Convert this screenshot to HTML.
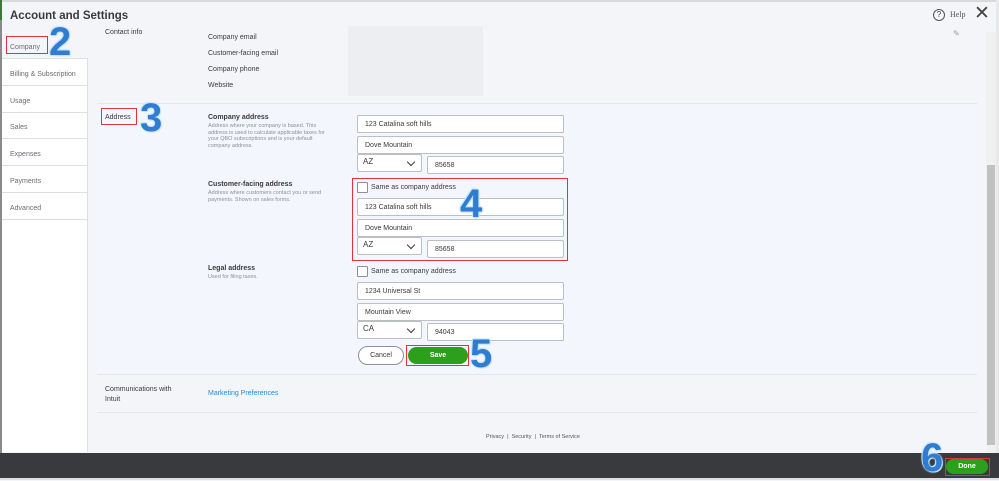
<!DOCTYPE html><html><head><style>
*{box-sizing:border-box;margin:0;padding:0}
body{width:999px;height:480px;overflow:hidden;background:#f4f5f8;font-family:"Liberation Sans",sans-serif;position:relative;color:#393a3d}
.a{position:absolute}
.t{font-size:7px;color:#393a3d}
.s{font-size:5.5px;color:#8d9096;line-height:6.5px}
.b{font-size:7px;font-weight:bold}
.in{position:absolute;background:#fff;border:1px solid #babec5;border-radius:2px;font-size:7px;padding-left:7px;display:flex;align-items:center}
.sel{position:absolute;background:#fff;border:1px solid #babec5;border-radius:2px;font-size:8px;padding:2px 0 0 5px}
.sel:after{content:"";position:absolute;right:7px;top:4px;width:5px;height:5px;border-right:1.5px solid #393a3d;border-bottom:1.5px solid #393a3d;transform:rotate(45deg)}
.cb{position:absolute;width:11px;height:11px;border:1px solid #8d9096;background:#fff;border-radius:1px}
.nav{position:absolute;left:2px;width:86px;height:27px;border-bottom:1px solid #dcdfe3;font-size:7px;color:#6b6c72;padding:12px 0 0 8px}
.num{position:absolute;font-weight:bold;font-size:40px;color:#2f7cd0;font-family:"Liberation Sans",sans-serif;text-shadow:0 0 2px #bfe0ff,0 0 2px #bfe0ff,1px 1px 0 #cce6ff,-1px -1px 0 #cce6ff}
.red{position:absolute;border:1px solid #e0333f}
</style></head><body>
<div class="a" style="left:0;top:0;width:999px;height:2px;background:#d9d9d9"></div>
<div class="a" style="left:0;top:0;width:2px;height:480px;background:#8a8a8a"></div>
<div class="a" style="left:0;top:0;width:2px;height:20px;background:#3a7a3a"></div>
<div class="a" style="left:10px;top:10px;font-size:11.5px;font-weight:bold;color:#393a3d">Account and Settings</div>
<div class="a" style="left:933px;top:9px;width:12px;height:12px;border:1px solid #555;border-radius:50%;font-size:8px;text-align:center;line-height:10px">?</div>
<div class="a" style="left:950px;top:10px;font-size:8px;font-family:'Liberation Serif',serif;color:#555">Help</div>
<div class="a" style="left:974px;top:2px;font-size:19px;color:#444">✕</div>
<div class="a" style="left:2px;top:32px;width:86px;height:420px;background:#fff;border-right:1px solid #dcdfe3"></div>
<div class="nav" style="top:32px;background:#f4f5f8">Company</div>
<div class="nav" style="top:59px">Billing &amp; Subscription</div>
<div class="nav" style="top:86px">Usage</div>
<div class="nav" style="top:112px">Sales</div>
<div class="nav" style="top:139px">Expenses</div>
<div class="nav" style="top:166px">Payments</div>
<div class="nav" style="top:193px">Advanced</div>
<div class="red" style="left:6px;top:36px;width:42px;height:18px"></div>
<div class="num" style="left:49px;top:20px">2</div>
<div class="a t" style="left:105px;top:29px">Contact info</div>
<div class="a t" style="left:208px;top:34px">Company email</div>
<div class="a t" style="left:208px;top:50px">Customer-facing email</div>
<div class="a t" style="left:208px;top:66px">Company phone</div>
<div class="a t" style="left:208px;top:82px">Website</div>
<div class="a" style="left:348px;top:26px;width:135px;height:70px;background:#eceef1"></div>
<div class="a" style="left:953px;top:29px;font-size:8px;color:#999">✎</div>
<div class="a" style="left:97px;top:103px;width:880px;height:272px;background:#f3f7fd;border-top:1px solid #e3e6ea;border-bottom:1px solid #e3e6ea"></div>
<div class="a t" style="left:105px;top:114px">Address</div>
<div class="red" style="left:101px;top:108px;width:36px;height:17px"></div>
<div class="num" style="left:140px;top:96px">3</div>
<div class="a b" style="left:208px;top:114px">Company address</div>
<div class="a s" style="left:208px;top:123px;width:126px">Address where your company is based. This address is used to calculate applicable taxes for your QBO subscriptions and is your default company address.</div>
<div class="a b" style="left:208px;top:181px">Customer-facing address</div>
<div class="a s" style="left:208px;top:190px;width:126px">Address where customers contact you or send payments. Shown on sales forms.</div>
<div class="a b" style="left:208px;top:265px">Legal address</div>
<div class="a s" style="left:208px;top:274px">Used for filing taxes.</div>
<div class="in" style="left:357px;top:115px;width:207px;height:18px">123 Catalina soft hills</div>
<div class="in" style="left:357px;top:136px;width:207px;height:18px">Dove Mountain</div>
<div class="sel" style="left:357px;top:154px;width:65px;height:18px">AZ</div>
<div class="in" style="left:427px;top:156px;width:137px;height:18px">85658</div>
<div class="red" style="left:352px;top:178px;width:216px;height:83px"></div>
<div class="cb" style="left:357px;top:182px"></div>
<div class="a t" style="left:371px;top:184px">Same as company address</div>
<div class="in" style="left:357px;top:198px;width:207px;height:18px">123 Catalina soft hills</div>
<div class="in" style="left:357px;top:219px;width:207px;height:18px">Dove Mountain</div>
<div class="sel" style="left:357px;top:237px;width:65px;height:18px">AZ</div>
<div class="in" style="left:427px;top:240px;width:137px;height:18px">85658</div>
<div class="num" style="left:460px;top:182px">4</div>
<div class="cb" style="left:357px;top:266px"></div>
<div class="a t" style="left:371px;top:268px">Same as company address</div>
<div class="in" style="left:357px;top:282px;width:207px;height:18px">1234 Universal St</div>
<div class="in" style="left:357px;top:303px;width:207px;height:18px">Mountain View</div>
<div class="sel" style="left:357px;top:321px;width:65px;height:18px">CA</div>
<div class="in" style="left:427px;top:323px;width:137px;height:18px">94043</div>
<div class="a" style="left:358px;top:346px;width:46px;height:19px;border:1px solid #8d9096;border-radius:10px;background:#fff;font-size:7px;text-align:center;line-height:17px">Cancel</div>
<div class="a" style="left:408px;top:347px;width:60px;height:17px;background:#2ca01c;border-radius:9px;color:#fff;font-size:7px;font-weight:bold;text-align:center;line-height:17px">Save</div>
<div class="red" style="left:406px;top:345px;width:63px;height:21px"></div>
<div class="num" style="left:470px;top:332px">5</div>
<div class="a t" style="left:105px;top:385px;width:78px;line-height:10px">Communications with Intuit</div>
<div class="a" style="left:208px;top:390px;font-size:7px;color:#2a8bd0">Marketing Preferences</div>
<div class="a" style="left:97px;top:412px;width:880px;height:1px;background:#e3e6ea"></div>
<div class="a" style="left:486px;top:434px;font-size:5.5px;color:#555">Privacy &nbsp;| &nbsp;Security &nbsp;| &nbsp;Terms of Service</div>
<div class="a" style="left:986px;top:32px;width:10px;height:421px;background:#f0f0f0"></div>
<div class="a" style="left:987px;top:165px;width:8px;height:280px;background:#c1c1c1"></div>
<div class="a" style="left:996px;top:0;width:3px;height:480px;background:#e8e8e8"></div>
<div class="a" style="left:0;top:453px;width:999px;height:25px;background:#393a3d"></div>
<div class="a" style="left:0;top:478px;width:999px;height:2px;background:#e0e0e0"></div>
<div class="a" style="left:946px;top:459px;width:42px;height:15px;background:#2ca01c;border-radius:8px;color:#fff;font-size:7px;font-weight:bold;text-align:center;line-height:15px">Done</div>
<div class="red" style="left:945px;top:458px;width:45px;height:18px"></div>
<div class="num" style="left:921px;top:436px">6</div>
</body></html>
